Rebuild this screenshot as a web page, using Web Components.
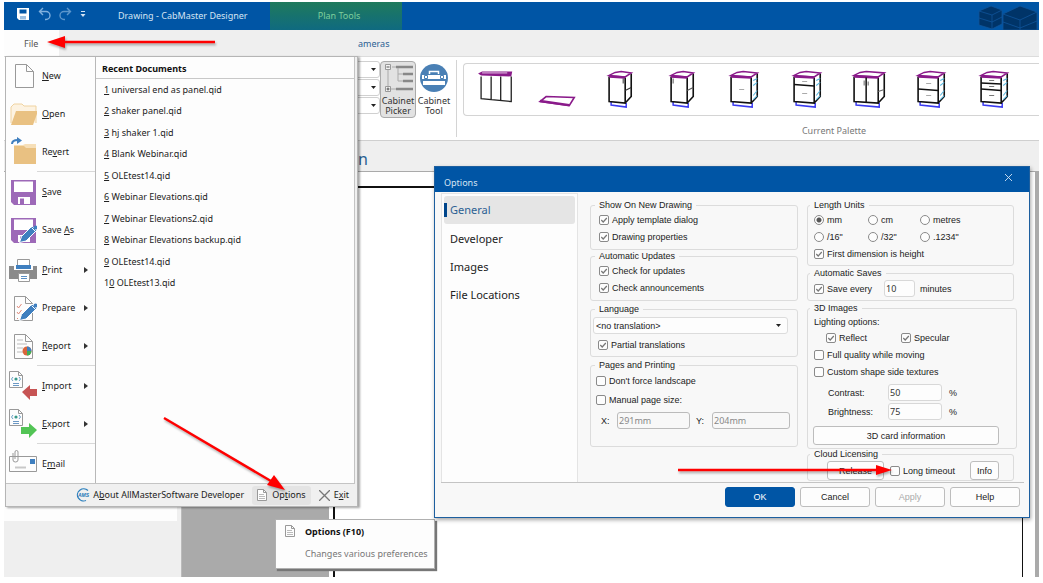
<!DOCTYPE html>
<html lang="en">
<head>
<meta charset="utf-8">
<title>Drawing - CabMaster Designer</title>
<style>
  html, body { height: 100%; }
  body { margin: 0; padding: 2px 4px 6px; box-sizing: border-box; background: #fff; overflow: hidden;
         font: 10px/14px "Noto Sans", "Open Sans", sans-serif; color: #222; }
</style>
</head>
<body>
<cab-app></cab-app>
<script>
function define(name, html) {
  const t = document.createElement('template');
  t.innerHTML = html;
  customElements.define(name, class extends HTMLElement {
    constructor() {
      super();
      this.attachShadow({ mode: 'open' }).append(t.content.cloneNode(true));
    }
    connectedCallback() {
      const r = this.shadowRoot;
      const part = r.querySelector('[data-main]');
      if (!part) return;
      for (const a of ['checked', 'disabled', 'value', 'name', 'aria-label'])
        if (this.hasAttribute(a)) part.setAttribute(a, this.getAttribute(a));
      const cap = r.querySelector('[data-caption]');
      if (cap) cap.textContent = this.getAttribute('caption');
    }
  });
}

/* ---------- small controls ---------- */
define('opt-check', `
<style>
  :host { display: flex; height: 17px; align-items: center; }
  label { display: flex; align-items: center; gap: 3px; white-space: nowrap; }
  input { appearance: none; flex: none; box-sizing: border-box; margin: 0; width: 10px; height: 10px; border: 1px solid #8a8a8a; border-radius: 2px; background: #fdfdfd; }
  input:checked { background: #fdfdfd url("data:image/svg+xml,%3Csvg xmlns='http://www.w3.org/2000/svg' viewBox='0 0 8 8'%3E%3Cpath d='M1.3 4 3.2 6 6.8 2' fill='none' stroke='%23777' stroke-width='1.2'/%3E%3C/svg%3E"); }
</style>
<label><input type="checkbox" data-main><span><slot></slot></span></label>`);

define('opt-button', `
<style>
  :host { display: block; height: 19px; }
  button { box-sizing: border-box; width: 100%; height: 100%; margin: 0; padding: 0; font: inherit; color: #222; background: #fdfdfd; border: 1px solid #bdbdbd; border-radius: 3px; }
  button:disabled { color: #aaa; }
  :host([primary]) button { background: #0055a5; border-color: #0055a5; color: #fff; }
</style>
<button type="button" data-main><slot></slot></button>`);

define('opt-field', `
<style>
  :host { display: block; }
  label { display: flex; align-items: center; }
  span { width: var(--caption-width, auto); }
  input { box-sizing: border-box; width: var(--field-width, 56px); height: 17px; margin: 0; padding: 0 1px; font: 9px/12px "Noto Sans", sans-serif; color: #333; background: #fdfdfd; border: 1px solid #d8d8d8; border-radius: 3px; }
  input:disabled { color: #888; background: #f8f8f8; border-color: #bbb; }
</style>
<label><span data-caption></span><input type="text" data-main></label>`);

define('group-box', `
<style>
  :host { display: block; }
  fieldset { margin: 0; min-width: 0; padding: 0 var(--inset, 8px) 4px; border: 1px solid #dcdcdc; border-radius: 3px; }
  legend { margin-left: -4px; padding: 0 4px; line-height: 12px; height: 12px; }
  :host([tight]) fieldset { padding-bottom: 3px; }
</style>
<fieldset><legend data-caption data-main></legend><slot></slot></fieldset>`);

define('unit-picker', `
<style>
  :host { display: grid; grid-template-columns: 54px 52px 1fr; }
  label { display: flex; align-items: center; gap: 3px; height: 17px; }
  input { appearance: none; box-sizing: border-box; flex: none; margin: 0; width: 10px; height: 10px; border: 1px solid #8a8a8a; border-radius: 50%; background: #fdfdfd; }
  input:checked { background: radial-gradient(circle, #555 0 2px, #fdfdfd 3px); }
</style>
<label><input type="radio" name="u" checked>mm</label>
<label><input type="radio" name="u">cm</label>
<label><input type="radio" name="u">metres</label>
<label><input type="radio" name="u">/16"</label>
<label><input type="radio" name="u">/32"</label>
<label><input type="radio" name="u">.1234"</label>`);

/* ---------- options dialog ---------- */
define('options-dialog', `
<style>
  :host { display: block; box-sizing: border-box; border: 1px solid #1d5f9f; background: #f8f8f8; box-shadow: 1px 2px 4px rgba(0,0,0,.35); }
  header { display: flex; justify-content: space-between; height: 25px; padding: 0 16px 0 9px; background: #0055a5; color: #d5e4f3; }
  h2 { margin: 0; font-size: 9px; font-weight: 400; line-height: 31px; }
  header button { border: 0; background: none; padding: 0; color: inherit; height: 20px; }
  header svg { display: block; width: 9px; height: 9px; }
  .body { display: flex; margin: 1px 5px 0 6px; border-bottom: 1px solid #c4c4c4; }
  nav { box-sizing: border-box; width: 137px; padding: 2px; border: 1px solid #e4e4e4; border-width: 1px 1px 0; background: #fdfdfd; font-size: 11px; }
  nav button { display: flex; align-items: center; gap: 3px; box-sizing: border-box; width: 100%; height: 28px; padding: 0 0 0 6px; margin: 0; border: 0; border-radius: 3px; background: none; font: inherit; color: #222; }
  nav button[aria-current] { padding-left: 0; margin-bottom: 1px; background: #e5e5e5; color: #2b5f93; }
  nav button[aria-current]::before { content: ""; width: 3px; height: 14px; background: #00468c; }
  form { flex: 1; display: grid; grid-template-columns: 208px 207px; gap: 9px; align-items: start; padding: 6px 0 1px 12px; font: 9px/12px "Liberation Sans", Arial, sans-serif; }
  .right { --inset: 6px; }
  .lang { margin-top: 2px; }
  select { appearance: none; display: block; box-sizing: border-box; width: 195px; height: 17px; margin: 2px 0 2px -6px; padding: 0 0 0 2px; font: inherit; color: #222; border: 1px solid #dcdcdc; border-radius: 3px;
    background: #fdfdfd url("data:image/svg+xml,%3Csvg xmlns='http://www.w3.org/2000/svg' viewBox='0 0 6 4'%3E%3Cpath d='M0 0h5L2.500 3z' fill='%23222'/%3E%3C/svg%3E") no-repeat right 5px center / 6px 4px; }
  .row { display: flex; align-items: center; }
  .lang opt-check { margin-left: -1px; }
  .pages { margin-top: 2px; }
  .pages opt-check { margin: 1px 0 2px -3px; }
  .pages .row { gap: 6px; margin: 4px 0 13px 2px; }
  .pages opt-field { --caption-width: 16px; --field-width: 73px; }
  .pages opt-field + opt-field { --field-width: 78px; }
  .saves { margin-top: 1px; }
  .saves .row { margin-top: 1px; }
  .saves opt-field { margin: 0 5px 0 12px; --field-width: 31px; }
  .images { margin: 1px -3px 0 0; }
  .images p { margin: 0; height: 15px; line-height: 16px; }
  .images .row { margin-left: 12px; gap: 34px; }
  .amounts { display: grid; gap: 2px; margin: 4px 0 6px 14px; --caption-width: 60px; --field-width: 54px; }
  .amounts div { display: flex; align-items: center; gap: 7px; }
  .wide { margin: 0 11px 0 -1px; }
  .cloud { margin-top: -1px; }
  .cloud .row { padding-top: 1px; margin: 0 8px -3px 13px; }
  .cloud .row opt-button { width: 57px; }
  .cloud .row opt-check { margin-left: 6px; }
  .cloud .row opt-button:last-child { width: 29px; margin-left: auto; }
  footer { display: flex; justify-content: flex-end; gap: 5px; padding: 4px 9px 10px; font: 9px/12px "Liberation Sans", Arial, sans-serif; }
  footer opt-button { width: 70px; height: 20px; }
</style>
<header><h2>Options</h2><button type="button" aria-label="Close"><svg viewBox="0 0 9 9"><path d="M1 1l7 7M8 1 1 8" stroke="currentColor" stroke-width=".9"/></svg></button></header>
<div class="body">
  <nav><button type="button" aria-current="page">General</button><button type="button">Developer</button><button type="button">Images</button><button type="button">File Locations</button></nav>
  <form>
    <div>
      <group-box caption="Show On New Drawing"><opt-check checked>Apply template dialog</opt-check><opt-check checked>Drawing properties</opt-check></group-box>
      <group-box caption="Automatic Updates"><opt-check checked>Check for updates</opt-check><opt-check checked>Check announcements</opt-check></group-box>
      <group-box class="lang" caption="Language" tight><select aria-label="Language"><option>&lt;no translation&gt;</option></select><opt-check checked>Partial translations</opt-check></group-box>
      <group-box class="pages" caption="Pages and Printing"><opt-check>Don't force landscape</opt-check><opt-check>Manual page size:</opt-check>
        <div class="row"><opt-field caption="X:" value="291mm" disabled></opt-field><opt-field caption="Y:" value="204mm" disabled></opt-field></div></group-box>
    </div>
    <div class="right">
      <group-box caption="Length Units" tight><unit-picker></unit-picker><opt-check checked>First dimension is height</opt-check></group-box>
      <group-box class="saves" caption="Automatic Saves" tight><div class="row"><opt-check checked>Save every</opt-check><opt-field value="10" aria-label="Minutes between saves"></opt-field><span>minutes</span></div></group-box>
      <group-box class="images" caption="3D Images" tight><p>Lighting options:</p>
        <div class="row"><opt-check checked>Reflect</opt-check><opt-check checked>Specular</opt-check></div>
        <opt-check>Full quality while moving</opt-check><opt-check>Custom shape side textures</opt-check>
        <div class="amounts"><div><opt-field caption="Contrast:" value="50"></opt-field>%</div><div><opt-field caption="Brightness:" value="75"></opt-field>%</div></div>
        <opt-button class="wide">3D card information</opt-button></group-box>
      <group-box class="cloud" caption="Cloud Licensing" tight><div class="row"><opt-button>Release</opt-button><opt-check>Long timeout</opt-check><opt-button>Info</opt-button></div></group-box>
    </div>
  </form>
</div>
<footer><opt-button primary>OK</opt-button><opt-button>Cancel</opt-button><opt-button disabled>Apply</opt-button><opt-button>Help</opt-button></footer>`);

/* ---------- file menu ---------- */
define('menu-item', `
<style>
  :host { display: block; height: 38px; }
  button { display: grid; grid-template-columns: 28px 1fr 11px; column-gap: 5px; align-items: center; box-sizing: border-box; width: 100%; height: 100%; padding: 0 0 0 3px; border: 0; background: none; font: inherit; color: #222; text-align: left; }
  i { display: none; width: 0; height: 0; border: 3px solid transparent; border-left: 4px solid #333; border-right: 0; }
  :host([more]) i { display: block; }
</style>
<button type="button"><slot name="icon"></slot><span><slot></slot></span><i></i></button>`);

const page = (x, y, w, h, f) => `<path d="M${x} ${y}h${w - f}l${f} ${f}v${h - f}h-${w}z" fill="#fdfdfd" stroke="#999"/><path d="M${x + w - f} ${y}v${f}h${f}" fill="none" stroke="#999"/>`;
const floppy = `<path d="M2 3h25v25H5l-3-3z" fill="#9d69b8"/><path d="M5 4.500h19V15H5z" fill="#fff"/><path d="M9 20h12v7H9z" fill="#fff"/><path d="M11 21.500h4V27h-4z" fill="#9d69b8"/>`;
const pen = `<path d="M10.500 27.500l2-6L23 11l4.500 4.500L17 26z" fill="#3f7fbf" stroke="#fff"/><path d="M22.500 12.500l3.500 3.500" stroke="#fff"/><circle cx="26.500" cy="12.500" r="2" fill="#3f7fbf"/>`;
const code = page(0.5, 0.5, 13, 16, 4) + `<circle cx="7" cy="8" r="1.600" fill="#3a9a8a"/><path d="M4 6 2.500 8 4 10M10 6l1.500 2L10 10" fill="none" stroke="#6aa0c8"/><path d="M4 12.500h6M4 14.500h6" stroke="#6b98c4"/>`;
const icon = (s) => `<svg slot="icon" width="28" height="30" viewBox="0 0 28 30">${s}</svg>`;

define('file-menu', `
<style>
  :host { display: block; box-sizing: border-box; border: 1px solid #b5b5b5; background: #f0f0f0; box-shadow: 2px 1px 2px rgba(0,0,0,.35); font-size: 9px; }
  .panes { display: flex; margin-right: 2px; border: 1px solid #c4c4c4; border-width: 0 1px 1px 0; background: #fdfdfd; }
  .commands { box-sizing: border-box; width: 90px; border-right: 1px solid #b8b8b8; }
  hr { margin: 0 0 1px 31px; border: 0; border-top: 1px solid #d8d8d8; }
  u { text-underline-offset: 1px; }
  section { flex: 1; }
  h2 { margin: 0; padding: 5px 6px 3px; border-bottom: 1px solid #c8c8c8; font-size: 9px; line-height: 13px; color: #111; }
  ol { display: grid; grid-template-rows: repeat(10, 1fr); height: 215px; margin: 0; padding: 0 0 0 8px; list-style: none; align-items: center; }
  a { color: inherit; text-decoration: none; }
  footer { display: flex; justify-content: flex-end; align-items: center; gap: 3px; height: 22px; padding-right: 3px; }
  footer button { display: flex; align-items: center; gap: 4px; height: 19px; padding: 0 5px; border: 0; border-radius: 3px; background: none; font: inherit; color: #222; }
  footer .about { gap: 2px; }
  footer .on { background: #e4e4e4; }
</style>
<div class="panes">
  <div class="commands">
    <menu-item>${icon(page(6.5, 3.5, 18, 23, 7))}<u>N</u>ew</menu-item>
    <menu-item>${icon(`<path d="M2 24V8l3-3h8l2 2h12v17" fill="#fdf3e2" stroke="#f0d3a0"/><path d="M7 12h22l-5 14H2z" fill="#e9c182"/>`)}<u>O</u>pen</menu-item>
    <menu-item>${icon(`<path d="M5 8h9l2-1h11v20H5z" fill="#f6dfb8"/><path d="M5 9h10l2 2h10v16H5z" fill="#e9c182"/><path d="M3 7q0-4 6-4" fill="none" stroke="#3f7fbf" stroke-width="2"/><path d="M8 0l5 3.500L8 7z" fill="#3f7fbf"/>`)}Re<u>v</u>ert</menu-item>
    <hr>
    <menu-item>${icon(floppy)}<u>S</u>ave</menu-item>
    <menu-item>${icon(floppy + pen)}Save <u>A</u>s</menu-item>
    <hr>
    <menu-item more>${icon(`<path d="M8.500 11V4.500h12V11" fill="#fff" stroke="#999"/><path d="M0 11h5v4h19v-4h4v13H0z" fill="#8b8b8b"/><path d="M7 10h15v4H7z" fill="#3f7fbf"/><path d="M9.500 18.500h11v8h-11z" fill="#fff" stroke="#999"/><path d="M12 21.500h6M12 23.500h6" stroke="#5b8fc4"/>`)}<u>P</u>rint</menu-item>
    <menu-item more>${icon(page(5.5, 3.5, 18, 24, 7) + `<path d="M8 13l1.500 2 3-4M8 19l1.500 2 3-4M8 25l1 1" fill="none" stroke="#e08a7a"/>` + pen)}Prepare</menu-item>
    <menu-item more>${icon(page(5.5, 3.5, 18, 24, 7) + `<path d="M8 9h6M8 13h10M8 17h6M8 21h6" stroke="#bbb"/><circle cx="18" cy="20" r="4.500" fill="#d9653b"/><path d="M18 20v-4.500a4.500 4.500 0 0 1 4.500 4.500z" fill="#3f7fbf"/><path d="M18 20h4.500a4.500 4.500 0 0 1-4.500 4.500z" fill="#3fae5a"/>`)}<u>R</u>eport</menu-item>
    <hr>
    <menu-item more>${icon(code + `<path d="M13 21l8-7v4h7v7h-7v4z" fill="#c75454"/>`)}<u>I</u>mport</menu-item>
    <menu-item more>${icon(code + `<path d="M28 21l-8-7v4h-8v7h8v4z" fill="#52c455"/>`)}<u>E</u>xport</menu-item>
    <hr>
    <menu-item>${icon(`<path d="M.5 7.500h27v15H.5z" fill="#fdfdfd" stroke="#999"/><path d="M21 10h5v5h-5z" fill="#3f7fbf"/><path d="M6 18.500h11" stroke="#c8c8c8" stroke-width="2"/><path d="M4 4v7q0 2 2.500 2T9 11V3q0-1.500-1.500-1.500T6 3v7" fill="none" stroke="#999"/>`)}E<u>m</u>ail</menu-item>
  </div>
  <section>
    <h2>Recent Documents</h2>
    <ol>
      <li><a href="#"><u>1</u> universal end as panel.qid</a></li>
      <li><a href="#"><u>2</u> shaker panel.qid</a></li>
      <li><a href="#"><u>3</u> hj shaker 1.qid</a></li>
      <li><a href="#"><u>4</u> Blank Webinar.qid</a></li>
      <li><a href="#"><u>5</u> OLEtest14.qid</a></li>
      <li><a href="#"><u>6</u> Webinar Elevations.qid</a></li>
      <li><a href="#"><u>7</u> Webinar Elevations2.qid</a></li>
      <li><a href="#"><u>8</u> Webinar Elevations backup.qid</a></li>
      <li><a href="#"><u>9</u> OLEtest14.qid</a></li>
      <li><a href="#">1<u>0</u> OLEtest13.qid</a></li>
    </ol>
  </section>
</div>
<footer>
  <button type="button" class="about"><svg width="15" height="14" viewBox="0 0 15 14"><path d="M12 2.500A6.300 6 0 1 0 10 12.500" fill="none" stroke="#2a7fbd" stroke-width="1.200"/><text x="2" y="9" font-family="Liberation Sans" font-weight="700" font-style="italic" font-size="5" fill="#1f77b8">AMS</text></svg><span>A<u>b</u>out AllMasterSoftware Developer</span></button>
  <button type="button" class="on"><svg width="11" height="13" viewBox="0 0 11 13">${page(0.5, 0.5, 9, 11, 3)}<path d="M2 5.500h5M2 7.500h6M2 9.500h6" stroke="#bbb"/></svg><span>Op<u>t</u>ions</span></button>
  <button type="button"><svg width="11" height="11" viewBox="0 0 11 11"><path d="M0 0l11 11M11 0 0 11" stroke="#777" stroke-width="1.300"/></svg><span>E<u>x</u>it</span></button>
</footer>`);

define('tip-card', `
<style>
  :host { display: grid; box-sizing: border-box; grid-template-columns: 20px 1fr; row-gap: 8px; padding: 5px 7px 7px 9px; border: 1px solid #b0b0b0; background: #fdfdfd; box-shadow: 2px 2px 1px #777; font-size: 9px; }
  strong { color: #111; }
  p { margin: 0; grid-column: 2; color: #777; white-space: nowrap; }
</style>
<svg width="11" height="13" viewBox="0 0 11 13">${page(0.5, 0.5, 9, 11, 3)}<path d="M2 5.500h5M2 7.500h6M2 9.500h6" stroke="#bbb"/></svg>
<strong>Options (F10)</strong><p>Changes various preferences</p>`);

/* ---------- title bar and ribbon ---------- */
define('title-bar', `
<style>
  :host { display: flex; align-items: stretch; height: 28px; background: #0055a5; color: #d5e4f3; font-size: 9px; overflow: hidden; }
  .tools { display: flex; align-items: center; gap: 8px; width: 114px; padding: 0 0 4px 12px; box-sizing: border-box; }
  .tools button { display: block; border: 0; padding: 0; background: none; height: 14px; }
  svg { display: block; }
  h1 { margin: 0; width: 152px; font-size: 9px; font-weight: 400; line-height: 28px; }
  .ctx { box-sizing: border-box; width: 132px; padding-left: 6px; text-align: center; line-height: 28px; color: #7fcf9b; background: linear-gradient(#1f7a5c, #0f6a80); border-top: 0; }
  .logo { margin-left: auto; }
</style>
<div class="tools">
  <button type="button" aria-label="Save"><svg width="14" height="14" viewBox="0 0 14 14"><path d="M1 1h12v12H3l-2-2z" fill="#fff"/><path d="M3.500 2.500h7v4h-7z" fill="#0055a5"/><path d="M4 9h6v3.500H4z" fill="#9cc0e2"/></svg></button>
  <button type="button" aria-label="Undo"><svg width="13" height="14" viewBox="0 0 13 14"><path d="M5 1 1.500 4.500 5 8M2 4.500h6a3.800 3.800 0 0 1 0 8H7" fill="none" stroke="#7fb0de" stroke-width="1.400"/></svg></button>
  <button type="button" aria-label="Redo"><svg width="13" height="14" viewBox="0 0 13 14"><path d="M8 1l3.500 3.500L8 8M11 4.500H5a3.800 3.800 0 0 0 0 8h1" fill="none" stroke="#5c96cc" stroke-width="1.400"/></svg></button>
  <button type="button" aria-label="Customize toolbar"><svg width="6" height="14" viewBox="0 0 6 14"><path d="M1 4.500h4" stroke="#d5e4f3"/><path d="M.5 7h5L3 10z" fill="#d5e4f3"/></svg></button>
</div>
<h1>Drawing - CabMaster Designer</h1>
<div class="ctx">Plan Tools</div>
<svg class="logo" width="61" height="28" viewBox="0 0 61 28"><g fill="#003468" stroke="#0f549a" stroke-width=".8"><path d="M1 9l12-5 11 4v14l-10 5-13-4z"/><path d="M1 9l13 4 10-5M14 13v14M1 16l13 4 10-5" fill="none"/><path d="M25 12l17-8 17 6v18H25z"/><path d="M25 12l17 6 17-8M42 18v10M25 20l17 6 17-7" fill="none"/></g></svg>`);

const P = '#8a1a8a';
/* A base cabinet in a 62 by 50 cell: l and r bound its front, inner holds doors and drawers. */
const cab = (l, r, inner) => `<svg viewBox="0 0 62 50"><path d="M${l + 2} 37v3.500l${r - l - 1} 2v-4" fill="none" stroke="#3a3af0" stroke-width="1.500"/><path d="M${l} 12V37L${r} 38.500V13M${r} 38.500l6-6.500V9" fill="#fff" stroke="#111" stroke-width="1.600"/><path d="M${l} 11l${r - l} 1.500 6-4-${r - l - 6}-1.500-6 1z" fill="#fff" stroke="${P}" stroke-width="1.500"/><path d="M${l} 12l${r - l} 1" stroke="${P}" stroke-width="2.600"/>${inner}</svg>`;
const rungs = '<path d="M40 16l4-2M40 21l4-3M40 31l4-5M40 35l4-4" stroke="#58b8e0"/>';
define('palette-gallery', `
<style>
  :host { display: grid; grid-template-columns: repeat(9, 1fr); box-sizing: border-box; height: 53px; padding-right: 14px; border: 1px solid #d4d4d4; border-right: 0; border-radius: 4px 0 0 4px; background: #fff; }
  svg { display: block; width: 100%; height: 51px; }
</style>
<svg viewBox="0 0 62 50"><path d="M17 12v22l30 3V12M27 12v23M36.500 12v24" fill="#fff" stroke="#222" stroke-width="1.300"/><path d="M14 9l4-2h30l-1 5-30-1z" fill="${P}"/><path d="M18 8.500h25" stroke="#e8c8e8"/></svg>
<svg viewBox="0 0 62 50"><path d="M20 32l28 1-5 8-29-4z" fill="#fff" stroke="${P}" stroke-width="1.600"/><path d="M14 36.500l29 4" stroke="${P}" stroke-width="2.400"/></svg>
${cab(20, 36, '<path d="M36 26l6-3M34 14v5" stroke="#333"/>')}
${cab(20, 36, '<path d="M36 26l6-3M22 14v5" stroke="#555"/>')}
${cab(18, 38, '<path d="M26 25h5" stroke="#aaa"/>' + rungs)}
${cab(18, 38, '<path d="M18 20l20 1.500" stroke="#111" stroke-width="1.600"/><path d="M26 17h5M26 29h5" stroke="#aaa"/>' + rungs)}
${cab(16, 40, '<path d="M28 13v25" stroke="#111" stroke-width="1.500"/><path d="M26 16v5M30 17v4M40 27l6-2" stroke="#666"/>')}
${cab(18, 38, '<path d="M18 24.500l20 1.500" stroke="#111" stroke-width="1.600"/><path d="M26 19h5M26 31h5" stroke="#aaa"/>' + rungs)}
${cab(18, 38, '<path d="M18 18.500l20 1M18 24.500l20 1.500" stroke="#111" stroke-width="1.600"/><path d="M26 16h5M26 22h5M26 31h5" stroke="#777"/>' + rungs)}`);

define('ribbon-bar', `
<style>
  :host { display: block; background: #fff; border-bottom: 1px solid #cfcfcf; }
  .tabs { display: flex; height: 27px; background: #efefef; border-bottom: 1px solid #dcdcdc; font-size: 9px; line-height: 28px; box-sizing: border-box; }
  .tabs a { text-decoration: none; color: #2b5f93; }
  .tabs .file { width: 55px; padding-left: 20px; box-sizing: border-box; background: #fdfdfd; color: #555; }
  .tabs .cams { margin-left: 299px; }
  .groups { display: flex; height: 83px; }
  .combos { display: grid; align-content: start; justify-content: end; gap: 1px; width: 376px; box-sizing: border-box; padding-top: 4px; }
  select { appearance: none; box-sizing: border-box; width: 120px; height: 17px; margin: 0; border: 1px solid #d0d0d0; border-radius: 3px; background: #fff url("data:image/svg+xml,%3Csvg xmlns='http://www.w3.org/2000/svg' viewBox='0 0 6 4'%3E%3Cpath d='M0 0h5L2.500 3z' fill='%23222'/%3E%3C/svg%3E") no-repeat right 2px center / 6px 4px; }
  .big { display: flex; flex-direction: column; align-items: center; box-sizing: border-box; width: 36px; height: 57px; margin-top: 4px; padding: 1px 0 0; border: 1px solid transparent; border-radius: 4px; background: none; font: 9px/10px "Noto Sans", "Open Sans", sans-serif; color: #333; }
  .big svg { flex: none; margin-bottom: 3px; }
  .big.on { border-color: #aaa; background: #e2e2e2; }
  .palette { flex: 1; margin: 3px 0 3px 4px; padding: 3px 0 0 6px; border-left: 1px solid #d4d4d4; }
  .palette p { margin: 8px 0 0; padding-left: 166px; text-align: center; font-size: 9px; color: #777; }
</style>
<div class="tabs"><a class="file" href="#">File</a><a class="cams" href="#">ameras</a></div>
<div class="groups">
  <div class="combos"><select aria-label="Width"></select><select aria-label="Height"></select><select aria-label="Depth"></select></div>
  <button type="button" class="big on"><svg width="30" height="30" viewBox="0 0 30 30"><path d="M13 4h17M20 11h10M20 18h10M13 26h17" stroke="#888" stroke-width="2.400"/><path d="M9 4h4M5 7v16M15 5v13h5M15 11h5M8 26h5" stroke="#aaa" fill="none"/><path d="M2.500 1.500h5v5h-5zM2.500 23.500h5v5h-5z" fill="#f4f4f4" stroke="#999"/><path d="M3.500 4h3M3.500 26h3M5 24.500v3" stroke="#555"/></svg><span>Cabinet Picker</span></button>
  <button type="button" class="big"><svg width="30" height="30" viewBox="0 0 30 30"><circle cx="15" cy="15" r="14" fill="#4a80b5"/><path d="M3 12h24v4H3zM4 18h22v4H4z" fill="#fff"/><path d="M10.500 11V8.500h9V11" fill="none" stroke="#fff" stroke-width="1.500"/><path d="M5.500 12.500h3v3h-3zM21.500 12.500h3v3h-3z" fill="#fff" stroke="#4a80b5"/></svg><span>Cabinet Tool</span></button>
  <div class="palette"><palette-gallery></palette-gallery><p>Current Palette</p></div>
</div>`);

/* ---------- workspace ---------- */
define('drawing-area', `
<style>
  :host { display: flex; flex-direction: column; background: #efefef; }
  h2 { margin: 0; height: 30px; padding-left: 354px; font-size: 16px; font-weight: 400; line-height: 36px; color: #2b5f93; overflow: hidden; }
  .work { flex: 1; display: flex; border-top: 1px solid #aaa; }
  .side { width: 177px; border-right: 1px solid #bbb; }
  .side div { height: 349px; margin-right: 4px; background: #fdfdfd; }
  .desk { width: 147px; background: #aaa; }
  .sheet { flex: 1; display: flex; padding: 14px 12px 0 4px; background: #fff; border-right: 4px solid #aaa; }
  .sheet div { flex: 1; border: 2px solid #111; border-bottom: 0; border-right-width: 1px; }
</style>
<h2>n</h2>
<div class="work"><div class="side"><div></div></div><div class="desk"></div><div class="sheet"><div></div></div></div>`);

define('cab-app', `
<style>
  :host { position: relative; display: flex; flex-direction: column; height: 100%; }
  drawing-area { flex: 1; }
  file-menu { position: absolute; left: 1px; top: 54px; width: 353px; }
  tip-card { position: absolute; left: 271px; top: 517px; width: 160px; }
  options-dialog { position: absolute; left: 430px; top: 164px; width: 596px; }
  .marks { position: absolute; left: 0; top: 0; width: 1035px; height: 575px; pointer-events: none; filter: drop-shadow(1px 2px 1px rgba(0,0,0,.3)); }
</style>
<title-bar></title-bar>
<ribbon-bar></ribbon-bar>
<drawing-area></drawing-area>
<file-menu></file-menu>
<tip-card></tip-card>
<options-dialog></options-dialog>
<svg class="marks" viewBox="0 0 1035 575" aria-hidden="true"><g stroke="#f00" stroke-width="2.400" fill="#f00"><path d="M211 40H58M160 416l112 66M674 468h205"/><g stroke="none"><path d="M43 40l18-6v12zM281 488l-18-5 7-10zM888 468l-16-5v10z"/></g></g></svg>`);
</script>
</body>
</html>
